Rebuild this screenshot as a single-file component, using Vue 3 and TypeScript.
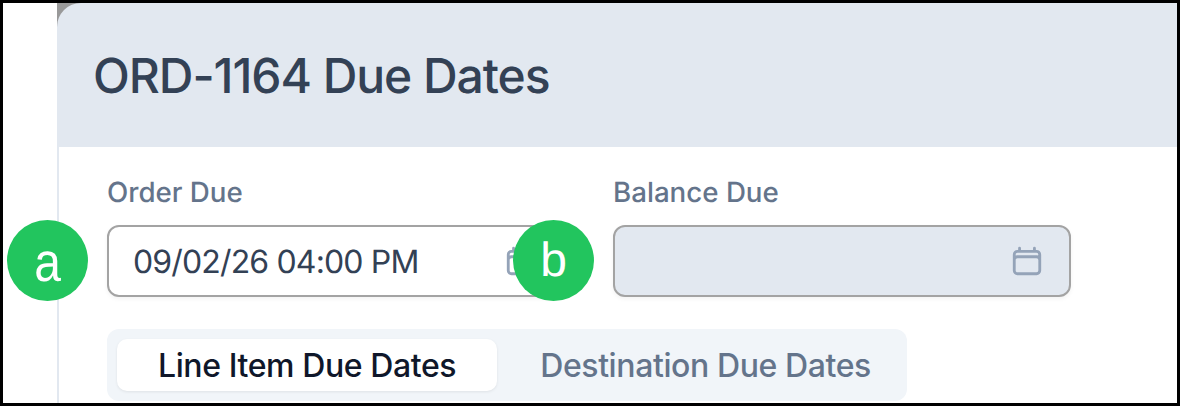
<script setup lang="ts">
const fields = [
  { id: 'order', label: 'Order Due', value: '09/02/26 04:00 PM', disabled: false, badge: 'a' },
  { id: 'balance', label: 'Balance Due', value: '', disabled: true, badge: 'b' },
]
const tabs = ['Line Item Due Dates', 'Destination Due Dates']
</script>

<template>
  <div class="frame">
    <section class="modal">
      <header class="head"><h1>ORD-1164 Due Dates</h1></header>
      <div class="body">
        <div class="fields">
          <div v-for="f in fields" :key="f.id" class="field">
            <label>{{ f.label }}</label>
            <div class="input" :class="{ disabled: f.disabled }">
              <span class="value">{{ f.value }}</span>
              <svg class="icon" viewBox="0 0 24 24" fill="none" stroke="currentColor" stroke-width="2" stroke-linecap="round" stroke-linejoin="round">
                <path d="M6.75 3v2.25M17.25 3v2.25M3 18.75V7.5a2.25 2.25 0 0 1 2.25-2.25h13.5A2.25 2.25 0 0 1 21 7.5v11.25m-18 0A2.25 2.25 0 0 0 5.25 21h13.5A2.25 2.25 0 0 0 21 18.75m-18 0v-7.5A2.25 2.25 0 0 1 5.25 9h13.5A2.25 2.25 0 0 1 21 11.25v7.5" />
              </svg>
            </div>
            <span class="badge"><span class="letter" :class="`letter-${f.badge}`">{{ f.badge }}</span></span>
          </div>
        </div>
        <div class="tabs">
          <button v-for="(t, i) in tabs" :key="t" class="tab" :class="{ active: i === 0 }">{{ t }}</button>
        </div>
      </div>
    </section>
  </div>
</template>

<style>
html, body { margin: 0; background: #fff; }
</style>

<style scoped>
.frame {
  box-sizing: border-box;
  width: 1180px;
  height: 406px;
  border: 3px solid #000;
  overflow: hidden;
  background: #fff;
  padding-left: 54px;
  font-family: Inter, "Liberation Sans", sans-serif;
  text-rendering: geometricPrecision;
}
.modal {
  height: 100%;
  background: linear-gradient(#999, #999) no-repeat top left / 24px 24px;
}
.head {
  box-sizing: border-box;
  height: 144px;
  background: #e2e8f0;
  border-top-left-radius: 24px;
  padding-left: 36px;
  padding-top: 1px;
  display: flex;
  align-items: center;
}
h1 {
  margin: 0;
  font-size: 48px;
  font-weight: 500;
  letter-spacing: -1.05px;
  color: #334155;
  line-height: 1;
}
.body {
  box-sizing: border-box;
  height: calc(100% - 144px);
  background: #fff;
  border-left: 2px solid #e2e8f0;
  padding: 30px 0 0 48px;
}
.fields {
  display: flex;
  gap: 48px;
}
.field {
  position: relative;
  width: 458px;
}
label {
  display: block;
  height: 48px;
  font-size: 27.7px;
  line-height: 30px;
  font-weight: 500;
  color: #64748b;
}
.input {
  box-sizing: border-box;
  height: 72px;
  border: 2px solid #a3a3a3;
  border-radius: 12px;
  background: #fff;
  padding: 0 25px 0 24px;
  display: flex;
  align-items: center;
  justify-content: space-between;
  box-shadow: 0 2px 4px rgba(0, 0, 0, 0.05);
}
.input.disabled { background: #e2e8f0; }
.value {
  font-size: 32px;
  letter-spacing: -0.85px;
  color: #334155;
}
.icon {
  width: 34px;
  height: 34px;
  color: #94a3b8;
  margin-left: auto;
}
.badge {
  position: absolute;
  left: -100px;
  top: 43px;
  width: 81px;
  height: 81px;
  border-radius: 50%;
  background: #22c55e;
  color: #fff;
  font-family: "Liberation Sans", sans-serif;
  font-size: 48px;
  display: flex;
  align-items: center;
  justify-content: center;
}
.letter { display: inline-block; }
.letter-a { transform: translateY(2.5px) scaleY(1.15); }
.tabs {
  margin-top: 32px;
  width: 800px;
  box-sizing: border-box;
  height: 72px;
  padding: 10px;
  border-radius: 12px;
  background: #f1f5f9;
  display: flex;
  gap: 2px;
}
.tab {
  height: 52px;
  border: 0;
  border-radius: 10px;
  background: transparent;
  font-family: inherit;
  font-size: 32px;
  font-weight: 500;
  letter-spacing: -0.4px;
  color: #64748b;
  padding: 0 41px;
  white-space: nowrap;
  flex: none;
}
.tab.active {
  background: #fff;
  color: #0f172a;
  box-shadow: 0 1px 3px rgba(0, 0, 0, 0.08);
}
</style>
